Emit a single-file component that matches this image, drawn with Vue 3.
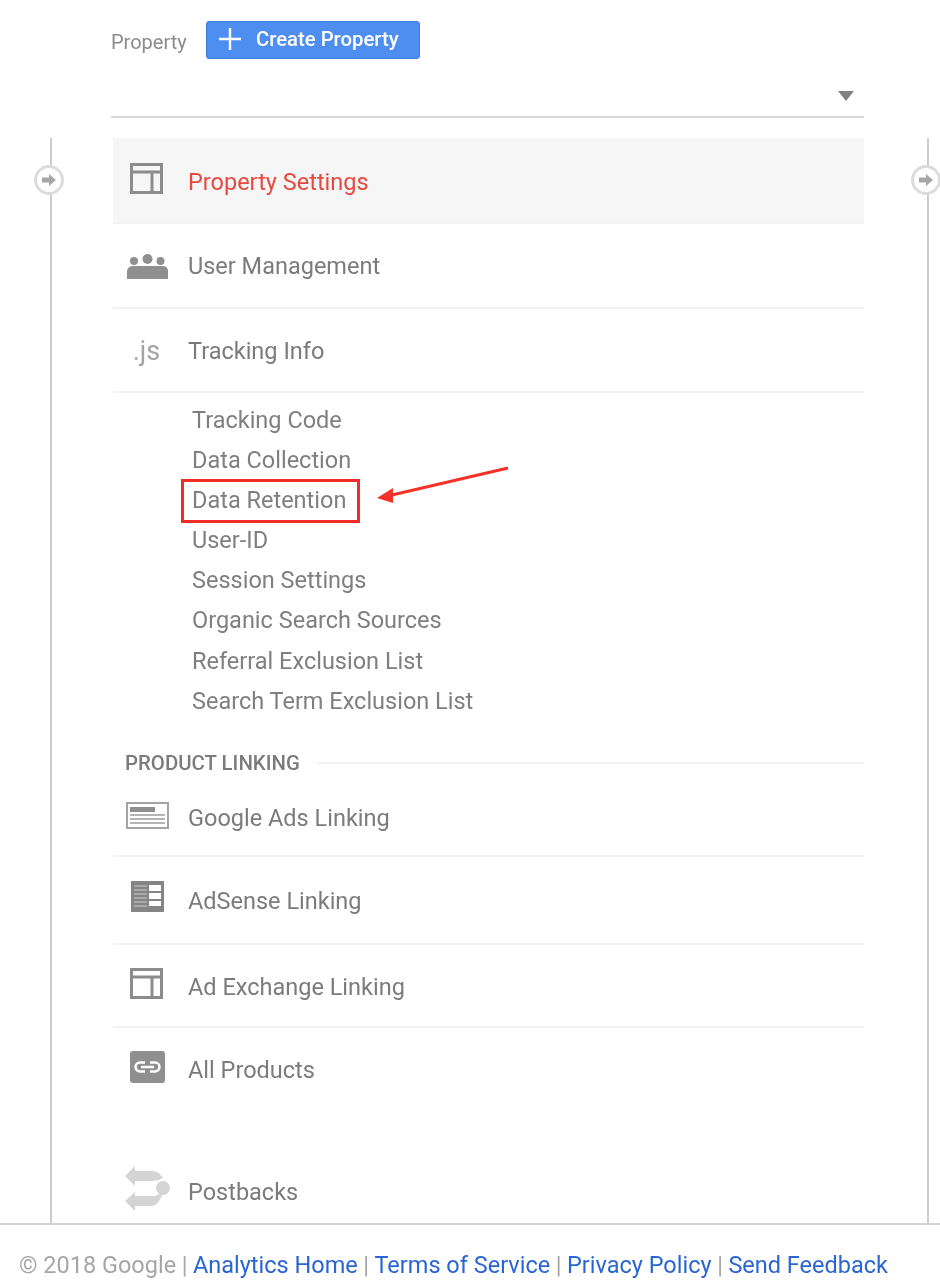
<script setup>
const subItems = ['Tracking Code', 'Data Collection', 'Data Retention', 'User-ID', 'Session Settings', 'Organic Search Sources', 'Referral Exclusion List', 'Search Term Exclusion List']
const footerLinks = ['Analytics Home', 'Terms of Service', 'Privacy Policy', 'Send Feedback']
</script>

<template>
  <div class="page">
    <div class="content">
      <div class="top">
        <span class="prop-label">Property</span>
        <button class="create">
          <svg class="plus" width="24" height="24" viewBox="0 0 24 24"><path d="M12 1v22M1 12h22" stroke="#fff" stroke-width="2.4" fill="none" /></svg>
          <span>Create Property</span>
        </button>
      </div>
      <div class="select"><span class="caret"></span></div>

      <div class="rail-zone">
        <div class="row active r1">
          <span class="ico">
            <svg class="nudge" width="33" height="31" viewBox="0 0 33 31"><path d="M1.500 1.500h30v28h-30zM1.500 9h30M22 9v20.500" fill="none" stroke="#8c8c8c" stroke-width="3" /></svg>
          </span>
          <span class="label">Property Settings</span>
        </div>
        <div class="row r2">
          <span class="ico">
            <svg width="42" height="26" viewBox="0 0 42 26"><g fill="#8f8f8f"><circle cx="7" cy="8" r="4" /><circle cx="20.500" cy="6" r="5" /><circle cx="33.500" cy="8" r="4" /><path d="M0 26v-8q1-5 6-5h29q6 0 6 5v8z" /></g></svg>
          </span>
          <span class="label">User Management</span>
        </div>
        <div class="row r3">
          <span class="ico js">.js</span>
          <span class="label">Tracking Info</span>
        </div>

        <ul class="subs">
          <li v-for="s in subItems" :key="s" :class="{ boxed: s === 'Data Retention' }">{{ s }}</li>
        </ul>

        <div class="section"><span>PRODUCT LINKING</span><i></i></div>

        <div class="row r4">
          <span class="ico">
            <svg width="43" height="27" viewBox="0 0 43 27"><rect x="1" y="1" width="41" height="25" fill="#fff" stroke="#a3a3a3" stroke-width="2" /><rect x="4" y="5" width="25" height="5" fill="#8f8f8f" /><path d="M4 13h35M4 17h35M4 21h35" stroke="#9c9c9c" stroke-width="1.500" /></svg>
          </span>
          <span class="label">Google Ads Linking</span>
        </div>
        <div class="row r5">
          <span class="ico">
            <svg width="33" height="31" viewBox="0 0 33 31"><rect width="33" height="31" fill="#858585" /><path d="M3 5h13M3 9h13M3 13h13M3 17h13M3 21h13M3 25h13" stroke="#b5b5b5" stroke-width="1.500" /><rect x="18" y="4" width="12" height="6" fill="#fff" /><rect x="18" y="12" width="12" height="6" fill="#fff" /><rect x="18" y="20" width="12" height="5" fill="#fff" /></svg>
          </span>
          <span class="label">AdSense Linking</span>
        </div>
        <div class="row r6">
          <span class="ico">
            <svg class="nudge" width="33" height="31" viewBox="0 0 33 31"><path d="M1.500 1.500h30v28h-30zM1.500 9h30M22 9v20.500" fill="none" stroke="#8c8c8c" stroke-width="3" /></svg>
          </span>
          <span class="label">Ad Exchange Linking</span>
        </div>
        <div class="row r7">
          <span class="ico">
            <svg width="35" height="32" viewBox="0 0 35 32"><rect width="35" height="32" rx="3" fill="#8f8f8f" /><path d="M15 11.500h-5a4.500 4.500 0 0 0 0 9h5M20 11.500h5a4.500 4.500 0 0 1 0 9h-5M11 16h13" fill="none" stroke="#fff" stroke-width="2.500" /></svg>
          </span>
          <span class="label">All Products</span>
        </div>
        <div class="row r8">
          <span class="ico">
            <svg width="45" height="45" viewBox="0 0 45 45"><g fill="#d4d4d4"><path d="M0 10L10 0V5H28Q35 6 38 12Q33 15 28 15H10V20z" /><path d="M0 35L10 26V30H28Q33 30 38 25Q35 38 28 40H10V45z" /><circle cx="38" cy="22" r="7" /></g></svg>
          </span>
          <span class="label">Postbacks</span>
        </div>

        <div class="rail left"><span class="node"><svg width="14" height="12" viewBox="0 0 14 12"><path d="M0 3.500h7V0l7 6-7 6V8.500H0z" fill="#a6a6a6" /></svg></span></div>
        <div class="rail right"><span class="node"><svg width="14" height="12" viewBox="0 0 14 12"><path d="M0 3.500h7V0l7 6-7 6V8.500H0z" fill="#a6a6a6" /></svg></span></div>
      </div>
    </div>

    <footer class="foot">
      <span>© 2018 Google</span>
      <template v-for="l in footerLinks" :key="l"><span class="sep">|</span><a>{{ l }}</a></template>
    </footer>

    <svg class="arrow" width="140" height="50" viewBox="0 0 140 50"><path d="M134 4L18 31" stroke="#f5322a" stroke-width="3" fill="none" /><path d="M3 34L19 24V39z" fill="#f5322a" /></svg>
  </div>
</template>

<style>
html, body { margin: 0; background: #fff; }
</style>

<style scoped>
.page {
  position: relative;
  width: 940px;
  height: 1282px;
  overflow: hidden;
  font-family: Roboto, "Liberation Sans", sans-serif;
  color: #7b7b7b;
  background: #fff;
  filter: blur(0.4px);
}
.content { padding: 21px 76px 0 111px; }
.top { display: flex; align-items: center; gap: 19px; height: 38px; }
.prop-label { font-size: 20px; width: 76px; white-space: nowrap; color: #8b8b8b; position: relative; top: 2px; }
.create {
  display: flex;
  align-items: center;
  width: 214px;
  height: 38px;
  padding: 0 0 2px 11px;
  gap: 14px;
  border: 1px solid #3f7fe0;
  border-radius: 3px;
  background: #4f8ef1;
  color: #fff;
  font: 500 20.300px Roboto, sans-serif;
}
.plus { flex: none; }
.select { position: relative; height: 57px; border-bottom: 2px solid #d9d9d9; }
.caret {
  position: absolute;
  right: 10px;
  top: 32px;
  border-left: 8px solid transparent;
  border-right: 8px solid transparent;
  border-top: 10px solid #808080;
}
.rail-zone { position: relative; margin-top: 20px; padding-left: 2px; height: 1085px; }
.row { display: flex; align-items: center; border-bottom: 2px solid #f2f2f2; box-sizing: border-box; }
.row.active { background: #f6f6f6; }
.row.active .label { color: #e6493f; }
.ico { width: 75px; flex: none; display: flex; justify-content: center; padding-right: 6px; box-sizing: border-box; }
.nudge { margin-right: 2px; }
.label { font-size: 23.500px; color: #7b7b7b; }
.js { font-size: 27px; color: #a3a3a3; font-family: Roboto, sans-serif; padding-right: 8px; }
.r1 { height: 86px; padding-top: 4px; }
.r1 .ico { margin-bottom: 8px; }
.r2 { height: 85px; padding-top: 1px; }
.r3 { height: 84px; padding-top: 2px; }
.r4 { height: 74px; padding-bottom: 1px; }
.r4 .ico { margin-bottom: 6px; }
.r5 { height: 88px; padding-top: 2px; }
.r5 .ico { margin-bottom: 8px; }
.r6 { height: 83px; padding-top: 4px; }
.r6 .ico { margin-bottom: 8px; }
.r7 { height: 86px; padding-bottom: 2px; border: 0; }
.r7 .ico { margin-bottom: 6px; }
.r8 { height: 80px; margin-top: 40px; padding-bottom: 4px; border: 0; }
.r8 .ico { margin-bottom: 6px; }
.subs { list-style: none; margin: 6.500px 0 0; padding: 0 0 0 79px; }
.subs li {
  height: 40.200px;
  line-height: 40.200px;
  font-size: 23.500px;
  color: #7f7f7f;
  position: relative;
}
.boxed::after {
  content: '';
  position: absolute;
  left: -11px;
  top: -1px;
  width: 179px;
  height: 44px;
  border: 3px solid #f02c24;
  box-sizing: border-box;
}
.section { display: flex; align-items: center; gap: 18px; margin: 21.500px 0 0 12px; height: 40px; }
.section span { font-size: 20.400px; font-weight: 500; color: #7b7b7b; white-space: nowrap; }
.section i { flex: 1; height: 2px; background: #f2f2f2; }
.rail { position: absolute; top: 0; width: 2px; height: 1085px; background: #cdcdcd; }
.rail.left { left: -61px; }
.rail.right { left: 816px; }
.node {
  position: absolute;
  left: -16px;
  top: 27px;
  width: 30px;
  height: 30px;
  box-sizing: border-box;
  border: 3px solid #dcdcdc;
  border-radius: 50%;
  background: #fff;
  display: flex;
  align-items: center;
  justify-content: center;
}
.foot {
  position: absolute;
  left: 0;
  right: 0;
  top: 1223px;
  height: 59px;
  box-sizing: border-box;
  border-top: 2px solid #d3d3d3;
  padding: 26px 0 0 19px;
  font-size: 23.500px;
  color: #a6a6a6;
  white-space: nowrap;
}
.foot a { color: #2a66d3; }
.sep { margin: 0 5.500px; }
.arrow { position: absolute; left: 374px; top: 464px; }
</style>
